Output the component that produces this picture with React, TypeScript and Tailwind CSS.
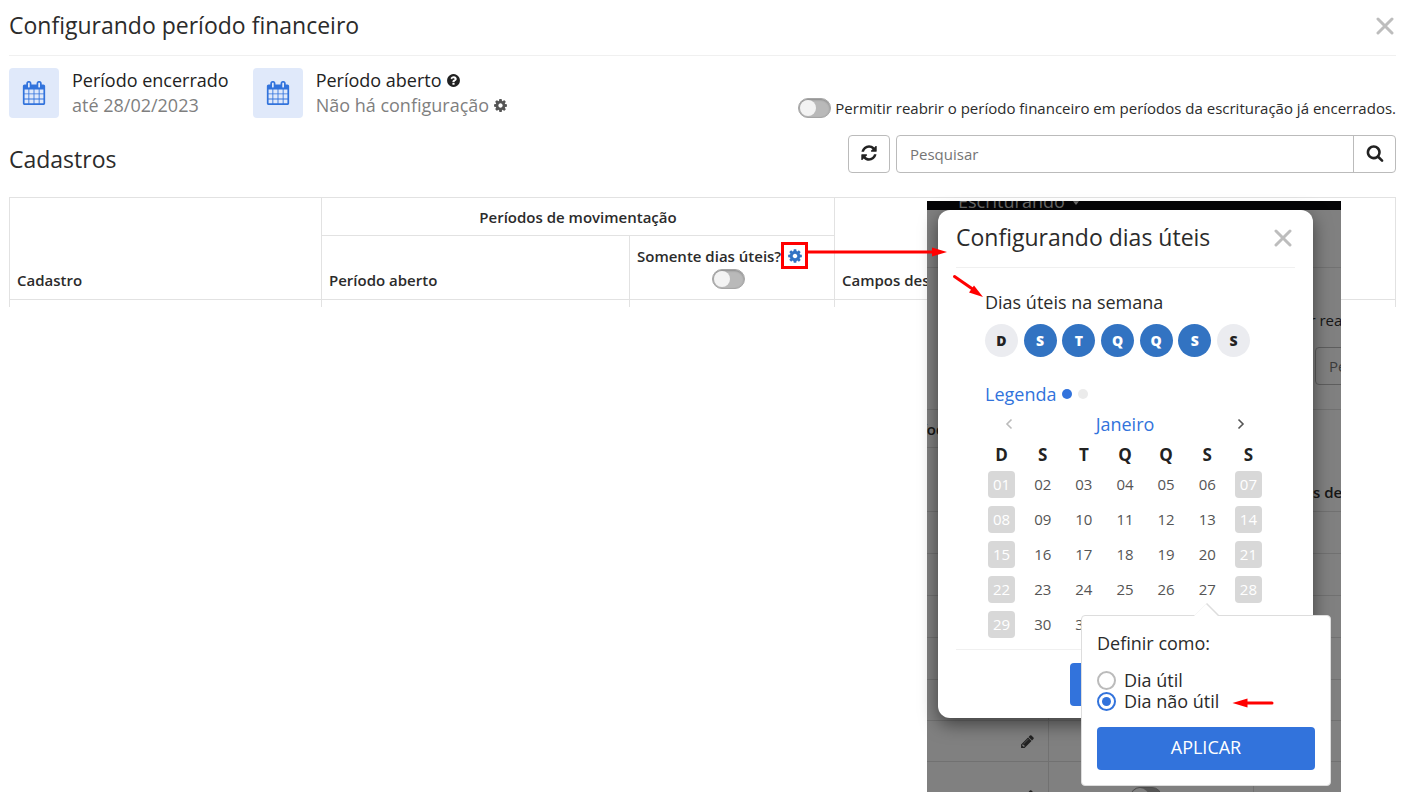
import React from "react";

const ICONS = {
  calendar:
    "M192 1664h288v-288h-288v288zm352 0h320v-288h-320v288zm-352-352h288v-320h-288v320zm352 0h320v-320h-320v320zm-352-384h288v-288h-288v288zm736 736h320v-288h-320v288zm-384-736h320v-288h-320v288zm768 736h288v-288h-288v288zm-384-352h320v-320h-320v320zm-352-864v-288q0-13-9.5-22.5t-22.5-9.5h-64q-13 0-22.5 9.5t-9.5 22.5v288q0 13 9.5 22.5t22.5 9.5h64q13 0 22.5-9.5t9.5-22.5zm736 864h288v-320h-288v320zm-384-384h320v-288h-320v288zm384 0h288v-288h-288v288zm32-480v-288q0-13-9.5-22.5t-22.5-9.5h-64q-13 0-22.5 9.5t-9.5 22.5v288q0 13 9.5 22.5t22.5 9.5h64q13 0 22.5-9.5t9.5-22.5zm384-64v1280q0 52-38 90t-90 38h-1408q-52 0-90-38t-38-90v-1280q0-52 38-90t90-38h128v-96q0-66 47-113t113-47h64q66 0 113 47t47 113v96h384v-96q0-66 47-113t113-47h64q66 0 113 47t47 113v96h128q52 0 90 38t38 90z",
  cog: "M1152 896q0-106-75-181t-181-75-181 75-75 181 75 181 181 75 181-75 75-181zm512-109v222q0 12-8 23t-20 13l-185 28q-19 54-39 91 35 50 107 138 10 12 10 25t-9 23q-27 37-99 108t-94 71q-12 0-26-9l-138-108q-44 23-91 38-16 136-29 186-7 28-36 28h-222q-14 0-24.5-8.5t-11.5-21.5l-28-184q-49-16-90-37l-141 107q-10 9-25 9-14 0-25-11-126-114-165-168-7-10-7-23 0-12 8-23 15-21 51-66.5t54-70.5q-27-50-41-99l-183-27q-13-2-21-12.5t-8-23.5v-222q0-12 8-23t19-13l186-28q14-46 39-92-40-57-107-138-10-12-10-24 0-10 9-23 26-36 98.5-107.5t94.5-71.5q13 0 26 10l138 107q44-23 91-38 16-136 29-186 7-28 36-28h222q14 0 24.5 8.5t11.5 21.5l28 184q49 16 90 37l142-107q9-9 24-9 13 0 25 10 129 119 165 170 7 8 7 22 0 12-8 23-15 21-51 66.5t-54 70.5q26 50 41 98l183 28q13 2 21 12.5t8 23.5z",
  refresh:
    "M1639 1056q0 5-1 7-64 268-268 434.5t-478 166.5q-146 0-282.5-55t-243.5-157l-129 129q-19 19-45 19t-45-19-19-45v-448q0-26 19-45t45-19h448q26 0 45 19t19 45-19 45l-137 137q71 66 161 102t187 36q134 0 250-65t186-179q11-17 53-117 8-23 30-23h192q13 0 22.5 9.5t9.5 22.5zm25-800v448q0 26-19 45t-45 19h-448q-26 0-45-19t-19-45 19-45l138-138q-148-137-349-137-134 0-250 65t-186 179q-11 17-53 117-8 23-30 23h-199q-13 0-22.5-9.5t-9.5-22.5v-7q65-268 270-434.5t480-166.5q146 0 284 55.5t245 156.5l130-129q19-19 45-19t45 19 19 45z",
  search:
    "M1216 832q0-185-131.5-316.5t-316.5-131.5-316.5 131.5-131.5 316.5 131.5 316.5 316.5 131.5 316.5-131.5 131.5-316.5zm512 832q0 52-38 90t-90 38q-54 0-90-38l-343-342q-179 124-399 124-143 0-273.5-55.5t-225-150-150-225-55.5-273.5 55.5-273.5 150-225 225-150 273.5-55.5 273.5 55.5 225 150 150 225 55.5 273.5q0 220-124 399l343 343q37 37 37 90z",
  pencil:
    "M491 1536l91-91-235-235-91 91v107h128v128h107zm523-928q0-22-22-22-10 0-17 7l-542 542q-7 7-7 17 0 22 22 22 10 0 17-7l542-542q7-7 7-17zm-54-192l416 416-832 832h-416v-416zm683 96q0 53-37 90l-166 166-416-416 166-165q36-38 90-38 53 0 91 38l235 234q37 39 37 91z",
  question:
    "M1024 1376v-192q0-14-9-23t-23-9h-192q-14 0-23 9t-9 23v192q0 14 9 23t23 9h192q14 0 23-9t9-23zm256-672q0-88-55.5-163t-138.5-116-170-41q-243 0-371 213-15 24 8 42l132 100q7 6 19 6 16 0 25-12 53-68 86-92 34-24 86-24 48 0 85.5 26t37.5 59q0 38-20 61t-68 45q-63 28-115.5 86.5t-52.5 125.5v36q0 14 9 23t23 9h192q14 0 23-9t9-23q0-19 21.5-49.5t54.5-49.5q32-18 49-28.5t46-35 44.5-48 28-60.5 12.5-81zm384 192q0 209-103 385.5t-279.5 279.5-385.5 103-385.5-103-279.5-279.5-103-385.5 103-385.5 279.5-279.5 385.5-103 385.5 103 279.5 279.5 103 385.5z",
};

function Icon({ name, className }: { name: keyof typeof ICONS; className: string }) {
  return (
    <svg viewBox="0 0 1792 1792" className={className} fill="currentColor" aria-hidden="true">
      <path d={ICONS[name]} />
    </svg>
  );
}

function CloseIcon() {
  return (
    <svg viewBox="0 0 18 18" className="size-[18px]" aria-hidden="true">
      <path d="M2 2 16 16M16 2 2 16" fill="none" stroke="currentColor" strokeWidth="3" strokeLinecap="round" />
    </svg>
  );
}

function Toggle({ id, label }: { id: string; label?: string }) {
  return (
    <input
      id={id}
      type="checkbox"
      role="switch"
      aria-label={label}
      className="flex h-5 w-[33px] shrink-0 appearance-none items-center rounded-full border border-[#a6a6a6] bg-[#b9b9b9] px-px shadow-[inset_0_1px_2px_rgba(0,0,0,0.25)] before:h-4 before:w-4 before:rounded-full before:bg-[#f3f3f3] before:content-['']"
    />
  );
}

function Period({ title, children }: { title: React.ReactNode; children: React.ReactNode }) {
  return (
    <div className="flex items-center gap-[13px]">
      <div className="flex size-[50px] items-center justify-center rounded bg-[#e0e9fa] text-[#3273dc]">
        <Icon name="calendar" className="size-6" />
      </div>
      <div className="text-[18px] leading-[25px]">
        <div className="flex items-center gap-1 font-medium text-[#222]">{title}</div>
        <div className="flex items-center gap-1 text-[#7f7f7f]">{children}</div>
      </div>
    </div>
  );
}

function PageHeader() {
  return (
    <>
      <header className="flex h-14 items-center justify-between border-b border-[#f0f0f0] pr-0.5 pb-1">
        <h1 className="text-[23px]">Configurando período financeiro</h1>
        <button aria-label="Fechar" className="text-[#bdbdbd]">
          <CloseIcon />
        </button>
      </header>
      <div className="mt-3 flex items-start justify-between">
        <div className="flex gap-6">
          <Period title="Período encerrado">até 28/02/2023</Period>
          <Period
            title={
              <>
                Período aberto <Icon name="question" className="size-[15px]" />
              </>
            }
          >
            Não há configuração
            <button aria-label="Configurar período aberto" className="text-[#555]">
              <Icon name="cog" className="size-[15px]" />
            </button>
          </Period>
        </div>
        <div className="mt-[30px] flex items-center gap-1">
          <Toggle id="reabrir" />
          <label htmlFor="reabrir" className="text-[15px] leading-5">
            Permitir reabrir o período financeiro em períodos da escrituração já encerrados.
          </label>
        </div>
      </div>
      <div className="mt-[17px] flex items-start">
        <h2 className="flex-1 pt-2 text-[23px] leading-8">Cadastros</h2>
        <button
          aria-label="Atualizar"
          className="mr-1.5 flex h-[38px] w-[42px] items-center justify-center rounded border border-[#bbb] pb-0.5 text-[#222]"
        >
          <Icon name="refresh" className="size-[18px]" />
        </button>
        <form className="flex h-[38px] w-[500px] rounded border border-[#bbb]">
          <input
            aria-label="Pesquisar"
            placeholder="Pesquisar"
            className="min-w-0 flex-1 px-[13px] text-[15px] outline-none placeholder:text-[#757575]"
          />
          <button
            type="button"
            aria-label="Buscar"
            className="flex w-[42px] items-center justify-center border-l border-[#bbb] pb-0.5 text-[#222]"
          >
            <Icon name="search" className="size-[18px]" />
          </button>
        </form>
      </div>
    </>
  );
}

function RecordsTable() {
  return (
    <table className="mt-[22px] w-full table-fixed border-collapse text-left text-[15px] leading-[22px] [&_td]:border-x [&_td]:border-[#e2e2e2] [&_th]:border [&_th]:border-[#e2e2e2] [&_th]:px-[7px] [&_th]:font-semibold">
      <colgroup>
        <col className="w-[312px]" />
        <col className="w-[308px]" />
        <col className="w-[205px]" />
        <col />
      </colgroup>
      <thead>
        <tr className="h-[38px]">
          <th rowSpan={2} className="pb-2 align-bottom">
            Cadastro
          </th>
          <th colSpan={2} className="text-center">
            Períodos de movimentação
          </th>
          <th rowSpan={2} className="pb-2 align-bottom">
            Campos des
          </th>
        </tr>
        <tr className="h-16">
          <th className="pb-2 align-bottom">Período aberto</th>
          <th className="pb-2.5 align-bottom">
            <div className="flex items-center">
              <label htmlFor="dias-uteis" className="whitespace-nowrap">
                Somente dias úteis?
              </label>
              <button
                aria-label="Configurar dias úteis"
                className="flex size-[27px] shrink-0 items-center justify-center border-[3px] border-[#f00] text-[#3273c4]"
              >
                <Icon name="cog" className="size-4" />
              </button>
            </div>
            <div className="flex justify-center pr-2">
              <Toggle id="dias-uteis" />
            </div>
          </th>
        </tr>
      </thead>
      <tbody>
        <tr className="h-[7px]">
          <td />
          <td />
          <td />
          <td />
        </tr>
      </tbody>
    </table>
  );
}

/* Dimmed page that shows behind the dialog. */
function Backdrop() {
  const rows = [false, false, false, false, false, true, true];
  return (
    <div className="absolute inset-0 flex flex-col overflow-hidden bg-[#808080] text-[15px] text-[#161616]">
      <div className="flex h-[9px] shrink-0 items-end bg-[#050507] pb-px pl-[31px] text-[18px] leading-4 text-[#6b6b6b]">
        Escriturando
        <svg viewBox="0 0 8 5" className="mb-1 ml-2 h-1 w-1.5" aria-hidden="true">
          <path d="M0 0h8L4 5z" fill="currentColor" />
        </svg>
      </div>
      <div className="h-[58px] shrink-0 border-b border-[#727272]" />
      <div className="mt-[42px] h-5 shrink-0 pl-[332px] leading-5 whitespace-nowrap">Permitir reabrir</div>
      <div className="mt-[17px] ml-[388px] flex h-[38px] w-[200px] shrink-0 items-center rounded border border-[#5e5e5e] pl-[13px] text-[#3b3b3b]">
        Pesquisar
      </div>
      <table className="mt-6 -ml-[187px] w-[881px] table-fixed border-collapse text-left leading-[22px] [&_td]:border [&_td]:border-[#717171] [&_th]:border [&_th]:border-[#717171] [&_th]:px-2 [&_th]:font-semibold">
        <colgroup>
          <col className="w-[308px]" />
          <col className="w-[205px]" />
          <col />
        </colgroup>
        <thead>
          <tr className="h-[38px]">
            <th colSpan={2} className="text-center">
              Períodos de movimentação
            </th>
            <th rowSpan={2} className="pb-2 align-bottom">
              Campos des
            </th>
          </tr>
          <tr className="h-16">
            <th />
            <th />
          </tr>
        </thead>
        <tbody>
          {rows.map((editable, i) => (
            <tr key={i} className={i === 6 ? "h-[70px]" : i > 3 ? "h-[41px]" : "h-[42px]"}>
              <td className="pr-[13px]">
                {editable && <Icon name="pencil" className="ml-auto size-[15px] text-[#222]" />}
              </td>
              <td className="pr-2.5">
                {i === 6 && (
                  <div className="mx-auto flex h-5 w-8 rounded-full border border-[#4d4d4d] bg-[#555]">
                    <span className="size-[18px] rounded-full bg-[#808080]" />
                  </div>
                )}
              </td>
              <td />
            </tr>
          ))}
        </tbody>
      </table>
    </div>
  );
}

const WEEK = ["D", "S", "T", "Q", "Q", "S", "S"];
const MONTH = [
  ["01", "02", "03", "04", "05", "06", "07"],
  ["08", "09", "10", "11", "12", "13", "14"],
  ["15", "16", "17", "18", "19", "20", "21"],
  ["22", "23", "24", "25", "26", "27", "28"],
  ["29", "30", "31"],
];

function WorkdaysDialog() {
  return (
    <div
      role="dialog"
      aria-label="Configurando dias úteis"
      className="relative mt-[9px] ml-[11px] flex h-[508px] w-[375px] flex-col rounded-xl bg-white px-[18px] shadow-[0_6px_18px_rgba(0,0,0,0.5)]"
    >
      <div className="flex h-[58px] items-center justify-between border-b border-[#f0f0f0] pr-px pb-0.5">
        <h2 className="text-[23px]">Configurando dias úteis</h2>
        <button aria-label="Fechar" className="mr-0.5 text-[#bdbdbd]">
          <CloseIcon />
        </button>
      </div>
      <div className="flex flex-col pt-[22px] pl-[25px]">
        <div className="pl-1 text-[18px] leading-6">Dias úteis na semana</div>
        <div className="mt-2.5 ml-1 flex w-[265px] justify-between">
          {WEEK.map((day, i) => (
            <button
              key={i}
              aria-pressed={i > 0 && i < 6}
              className={
                i > 0 && i < 6
                  ? "size-[33px] rounded-full bg-[#3273c2] text-[14px] font-extrabold text-white"
                  : "size-[33px] rounded-full bg-[#ebecf0] text-[14px] font-extrabold text-[#222]"
              }
            >
              {day}
            </button>
          ))}
        </div>
        <div className="mt-[25px] ml-1 flex items-center gap-1.5 text-[18px] leading-6 text-[#3273dc]">
          Legenda
          <span className="size-2.5 rounded-full bg-[#3273dc]" />
          <span className="size-2.5 rounded-full bg-[#ebebeb]" />
        </div>
        <div className="mt-1.5 flex w-[288px] items-center justify-between px-[23px] leading-6">
          <button aria-label="Mês anterior" className="text-[#bbb]">
            <svg viewBox="0 0 10 12" className="h-3 w-2.5">
              <path d="M7.5 1.5 3 6l4.500 4.500" fill="none" stroke="currentColor" strokeWidth="1.600" />
            </svg>
          </button>
          <span className="text-[18px] text-[#3273dc]">Janeiro</span>
          <button aria-label="Próximo mês" className="text-[#555]">
            <svg viewBox="0 0 10 12" className="h-3 w-2.5">
              <path d="M2.500 1.500 7 6l-4.500 4.500" fill="none" stroke="currentColor" strokeWidth="1.600" />
            </svg>
          </button>
        </div>
        <table className="mt-[7px] w-[288px] table-fixed border-collapse">
          <thead>
            <tr className="h-6">
              {WEEK.map((day, i) => (
                <th key={i} className="p-0 text-center text-[17px] leading-6 font-bold text-[#222]">
                  {day}
                </th>
              ))}
            </tr>
          </thead>
          <tbody>
            {MONTH.map((week) => (
              <tr key={week[0]} className="h-[35px]">
                {week.map((day, i) => (
                  <td key={day} className="p-0">
                    <button
                      className={
                        i === 0 || i === 6
                          ? "mx-auto block size-[27px] rounded bg-[#d8d8d8] text-[15px] text-white"
                          : "mx-auto block size-[27px] rounded text-[15px] text-[#555]"
                      }
                    >
                      {day}
                    </button>
                  </td>
                ))}
              </tr>
            ))}
          </tbody>
        </table>
      </div>
      <div className="mt-[7px] flex justify-center border-t border-[#f0f0f0] pt-[13px]">
        <button aria-label="Salvar" className="h-[43px] w-[111px] rounded bg-[#3273dc]" />
      </div>
    </div>
  );
}

function DayPopover() {
  const radio =
    "flex size-[19px] appearance-none items-center justify-center rounded-full border-2 border-[#bbb] checked:border-[#3273dc] checked:before:size-[9px] checked:before:rounded-full checked:before:bg-[#3273dc] checked:before:content-['']";
  return (
    <div className="absolute top-[615px] left-[1081px] flex w-[250px] flex-col rounded border border-[#ddd] bg-white p-[15px] text-[18px]">
      <svg viewBox="0 0 26 13" className="absolute -top-[13px] left-[112px] h-[13px] w-[26px]" aria-hidden="true">
        <path d="M0 13 12.500 0.500 25 13z" fill="#fff" />
        <path d="M12.500 0.500 25 13" fill="none" stroke="#ddd" strokeWidth="1.500" />
        <path d="M0 13 12.500 0.500" fill="none" stroke="#eee" strokeWidth="0.500" />
      </svg>
      <div className="leading-6">Definir como:</div>
      <div className="mt-[15px] flex flex-col">
        <label className="flex items-center gap-2 leading-[21px]">
          <input type="radio" name="tipo" className={radio} />
          Dia útil
        </label>
        <label className="flex items-center gap-2 leading-[21px]">
          <input type="radio" name="tipo" defaultChecked className={radio} />
          Dia não útil
        </label>
      </div>
      <button className="mt-[15px] h-[43px] rounded bg-[#3273dc] pb-0.5 text-white">APLICAR</button>
    </div>
  );
}

/* Red guide arrows laid over the screens. */
function Arrows() {
  return (
    <>
      <svg viewBox="0 0 140 12" className="absolute top-[246px] left-[807px] h-3 w-[140px]" aria-hidden="true">
        <path d="M0 6H128" stroke="#f00" strokeWidth="3" />
        <path d="M125 1.500 140 6l-15 4.500z" fill="#f00" />
      </svg>
      <svg viewBox="0 0 32 26" className="absolute top-[273px] left-[952px] h-[26px] w-8" aria-hidden="true">
        <path d="M2.500 3.500 22 17" stroke="#f00" strokeWidth="3" strokeLinecap="round" />
        <path d="M22 12.500 31 24 17 19.500z" fill="#f00" />
      </svg>
      <svg viewBox="0 0 42 10" className="absolute top-[698px] left-[1232px] h-2.5 w-[42px]" aria-hidden="true">
        <path d="M14 5H40" stroke="#f00" strokeWidth="3" strokeLinecap="round" />
        <path d="M0.500 5 15.500 0.500v9z" fill="#f00" />
      </svg>
    </>
  );
}

export default function App() {
  return (
    <main className="relative min-h-screen bg-white px-[9px] font-['Open_Sans','Noto_Sans',sans-serif] text-[#2b2b2b]">
      <PageHeader />
      <RecordsTable />
      <section className="absolute top-[201px] left-[927px] h-[591px] w-[414px]">
        <Backdrop />
        <WorkdaysDialog />
      </section>
      <DayPopover />
      <Arrows />
    </main>
  );
}
